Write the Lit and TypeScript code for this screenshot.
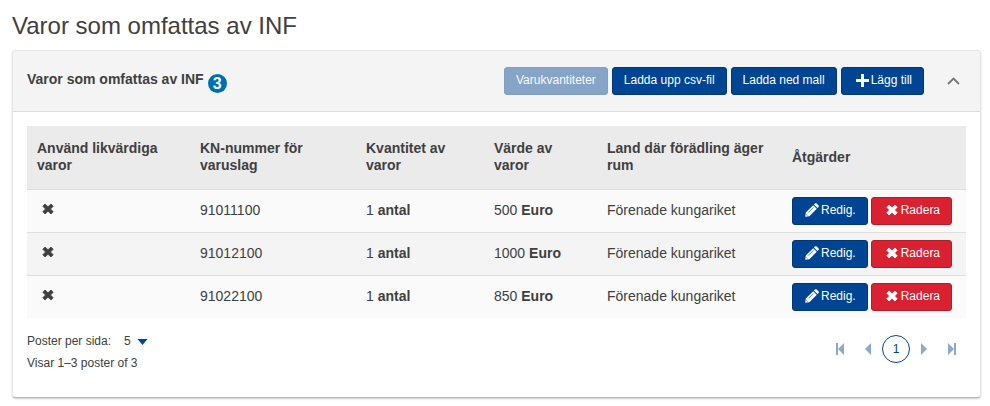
import { LitElement, html, css, svg } from "lit";
import { customElement, property, state } from "lit/decorators.js";

interface Goods {
  code: string;
  quantity: number;
  value: number;
  country: string;
}

const cross = html`<svg class="cross" viewBox="0 0 12 12" aria-hidden="true">
  <path d="M3 1 6 3.8 9 1l2.2 2.2L8.5 6l2.7 2.8L9 11 6 8.2 3 11 .8 8.8 3.5 6 .8 3.2z"
    fill="currentColor" stroke="currentColor" stroke-width=".8" stroke-linejoin="round" />
</svg>`;

const plus = html`<svg class="plus" viewBox="0 0 13 13" aria-hidden="true">
  <path d="M5 0h3v5h5v3H8v5H5V8H0V5h5z" fill="currentColor" />
</svg>`;

const pencil = html`<svg class="pencil" viewBox="0 0 14 14" aria-hidden="true">
  <path d="M8.2 2.2 11.8 5.8 4.4 13.2.2 13.8.8 9.6zM8.9 1.5 9.9.5q.9-.7 1.8 0L13.5 2.3q.7.9 0 1.8l-1 1z"
    fill="currentColor" />
  <path d="M3.4 9.4 8.4 4.4M1.5 11.4l1.1 1.1" stroke="#004494" stroke-width=".7" fill="none" />
</svg>`;

@customElement("goods-panel")
export class GoodsPanel extends LitElement {
  static styles = css`
    :host {
      display: block;
      background: #fff;
      border: 1px solid #e6e6e6;
      border-bottom-color: #b8b8b8;
      border-radius: 4px;
      box-shadow: 0 1px 2px rgba(0, 0, 0, 0.2);
    }
    header {
      display: flex;
      align-items: center;
      gap: 5px;
      min-height: 60px;
      padding: 0 14px;
      background: #f4f4f4;
      border-bottom: 1px solid #dcdcdc;
      border-radius: 3px 3px 0 0;
      box-sizing: content-box;
    }
    .title {
      display: flex;
      flex: 1;
      align-items: flex-start;
      gap: 4px;
      margin: 0;
      font-size: 14px;
      line-height: 19px;
      font-weight: bold;
    }
    .badge {
      width: 19px;
      height: 19px;
      margin-top: 4px;
      border-radius: 50%;
      background: #006fb4;
      color: #fff;
      font-size: 16px;
      line-height: 19px;
      text-align: center;
    }
    .actions {
      display: flex;
      gap: 4px;
    }
    button,
    select {
      margin: 0;
      font: inherit;
      color: inherit;
      cursor: pointer;
    }
    .btn {
      display: inline-flex;
      align-items: center;
      justify-content: center;
      height: 28px;
      padding: 0 11px 2px;
      border: 1px solid #003776;
      border-radius: 3px;
      background: #004494;
      color: #fff;
      font-size: 12px;
      line-height: 16px;
      white-space: nowrap;
    }
    .btn:disabled {
      opacity: 0.45;
      cursor: default;
    }
    .danger {
      background: #da2131;
      border-color: #b51c29;
      gap: 3px;
      padding-left: 14px;
    }
    .add {
      padding-left: 14px;
    }
    .edit {
      gap: 2px;
      padding-left: 12px;
    }
    .toggle {
      display: flex;
      width: 26px;
      height: 26px;
      margin-left: 11px;
      padding: 0;
      align-items: center;
      justify-content: center;
      border: 0;
      background: none;
    }
    .chevron {
      width: 13px;
      height: 8px;
    }
    .cross {
      width: 12px;
      height: 12px;
    }
    .plus {
      width: 13px;
      height: 13px;
      margin-right: 2px;
    }
    .pencil {
      width: 14px;
      height: 14px;
    }
    .content {
      padding: 14px 14px 23px;
    }
    table {
      width: 100%;
      table-layout: fixed;
      border-collapse: collapse;
      font-size: 14px;
      line-height: 17px;
    }
    th,
    td {
      box-sizing: border-box;
      padding: 0 10px;
      text-align: left;
    }
    th {
      height: 63px;
      background: #ebebeb;
    }
    td {
      height: 43px;
      padding-bottom: 1px;
      border-top: 1px solid #dedede;
    }
    .tools {
      padding-bottom: 0;
    }
    .tools .actions {
      gap: 3px;
    }
    tbody tr {
      background: #fafafa;
    }
    tbody tr:nth-child(even) {
      background: #f4f4f4;
    }
    .c1 { width: 163px; }
    .c2 { width: 166px; }
    .c3 { width: 128px; }
    .c4 { width: 113px; }
    .c5 { width: 185px; }
    .c6 { width: 184px; }
    .flag {
      display: flex;
      padding: 0 5px 2px;
    }
    footer {
      display: flex;
      justify-content: space-between;
      align-items: flex-start;
      padding-top: 13px;
      font-size: 12px;
      line-height: 21px;
    }
    .size {
      display: flex;
    }
    .picker {
      display: grid;
      align-items: center;
      margin-left: 13px;
    }
    .picker > * {
      grid-area: 1 / 1;
    }
    select {
      appearance: none;
      width: 26px;
      height: 21px;
      padding: 0;
      border: 0;
      background: none;
    }
    .caret {
      width: 11px;
      height: 6px;
      justify-self: end;
      margin-right: 2px;
      pointer-events: none;
    }
    .summary {
      margin: 1px 0 0;
    }
    .pages {
      display: flex;
      align-items: center;
      margin-top: 4px;
    }
    .pages button {
      display: flex;
      width: 28px;
      height: 28px;
      padding: 0;
      align-items: center;
      justify-content: center;
      border: 0;
      background: none;
      color: #8caace;
    }
    .pages .current {
      border: 1px solid #004494;
      border-radius: 50%;
      color: #004494;
    }
    .pages svg {
      width: 10px;
      height: 12px;
    }
  `;

  @property({ attribute: false }) rows: Goods[] = [];
  @state() private open = true;

  private page(label: string, shape: unknown) {
    return html`<button type="button" aria-label=${label}>
      <svg viewBox="0 0 10 12" fill="currentColor" aria-hidden="true">${shape}</svg>
    </button>`;
  }

  private renderRow(row: Goods) {
    return html`<tr>
      <td><span class="flag" role="img" aria-label="Nej">${cross}</span></td>
      <td>${row.code}</td>
      <td>${row.quantity} <b>antal</b></td>
      <td>${row.value} <b>Euro</b></td>
      <td>${row.country}</td>
      <td class="tools">
        <div class="actions">
          <button type="button" class="btn edit">${pencil}Redig.</button>
          <button type="button" class="btn danger">${cross}Radera</button>
        </div>
      </td>
    </tr>`;
  }

  private renderContent() {
    return html`<div class="content">
      <table>
        <thead>
          <tr>
            <th class="c1" scope="col">Använd likvärdiga varor</th>
            <th class="c2" scope="col">KN-nummer för varuslag</th>
            <th class="c3" scope="col">Kvantitet av varor</th>
            <th class="c4" scope="col">Värde av varor</th>
            <th class="c5" scope="col">Land där förädling äger rum</th>
            <th class="c6" scope="col">Åtgärder</th>
          </tr>
        </thead>
        <tbody>${this.rows.map((r) => this.renderRow(r))}</tbody>
      </table>
      <footer>
        <div>
          <div class="size">
            <label for="size">Poster per sida:</label>
            <span class="picker">
              <select id="size">
                <option>5</option>
                <option>10</option>
                <option>20</option>
              </select>
              <svg class="caret" viewBox="0 0 11 6" aria-hidden="true"><path d="M.5 0h10L5.5 6z" fill="#004494" /></svg>
            </span>
          </div>
          <p class="summary">Visar 1–3 poster of ${this.rows.length}</p>
        </div>
        <nav class="pages" aria-label="Sidor">
          ${this.page("Första", svg`<path d="M1 0h2v12H1zM9 0v12L3 6z" />`)}
          ${this.page("Föregående", svg`<path d="M8 0v12L2 6z" />`)}
          <button type="button" class="current" aria-current="page">1</button>
          ${this.page("Nästa", svg`<path d="M2 0v12L8 6z" />`)}
          ${this.page("Sista", svg`<path d="M7 0h2v12H7zM1 0v12L7 6z" />`)}
        </nav>
      </footer>
    </div>`;
  }

  render() {
    return html`
      <header>
        <h2 class="title">Varor som omfattas av INF<span class="badge">${this.rows.length}</span></h2>
        <div class="actions">
          <button type="button" class="btn" disabled>Varukvantiteter</button>
          <button type="button" class="btn">Ladda upp csv-fil</button>
          <button type="button" class="btn">Ladda ned mall</button>
          <button type="button" class="btn add">${plus}Lägg till</button>
        </div>
        <button type="button" class="toggle" aria-label="Visa eller dölj" aria-expanded=${this.open}
          @click=${() => (this.open = !this.open)}>
          <svg class="chevron" viewBox="0 0 13 8" aria-hidden="true">
            <path d="M1 7l5.5-5.5L12 7" fill="none" stroke="#757575" stroke-width="1.8" />
          </svg>
        </button>
      </header>
      ${this.open ? this.renderContent() : null}
    `;
  }
}

@customElement("app-root")
export class AppRoot extends LitElement {
  static styles = css`
    :host {
      display: block;
      padding: 10px 9px 9px 12px;
      background: #fff;
      color: #404040;
      font-family: "Liberation Sans", Arial, sans-serif;
    }
    h1 {
      margin: 0 0 8px;
      font-size: 24px;
      line-height: 32px;
      font-weight: normal;
    }
  `;

  private rows: Goods[] = [
    { code: "91011100", quantity: 1, value: 500, country: "Förenade kungariket" },
    { code: "91012100", quantity: 1, value: 1000, country: "Förenade kungariket" },
    { code: "91022100", quantity: 1, value: 850, country: "Förenade kungariket" },
  ];

  render() {
    return html`
      <h1>Varor som omfattas av INF</h1>
      <goods-panel .rows=${this.rows}></goods-panel>
    `;
  }
}
